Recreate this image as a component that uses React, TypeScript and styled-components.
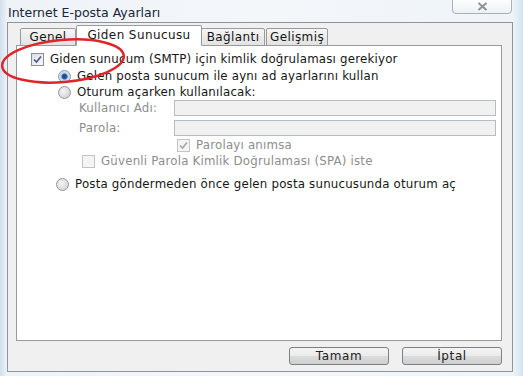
import styled, { createGlobalStyle } from 'styled-components';

const GlobalStyle = createGlobalStyle`
  html, body {
    margin: 0;
    padding: 0;
    background: #dfe9f2;
  }
  * {
    box-sizing: border-box;
  }
`;

const Window = styled.div`
  position: relative;
  width: 523px;
  height: 376px;
  overflow: hidden;
  display: flex;
  flex-direction: column;
  font-family: 'DejaVu Sans', Verdana, sans-serif;
  font-size: 11.8px;
  letter-spacing: 0.2px;
  color: #161616;
  background: linear-gradient(90deg, #cfe0ee 0px, #eef3f8 7px, #f4f7fa 50%, #eef4f8 calc(100% - 10px), #d3e4ef 100%);
`;

const TitleBar = styled.div`
  height: 22px;
  flex: none;
  display: flex;
  align-items: flex-start;
  justify-content: space-between;
  padding-left: 8px;
`;

const Title = styled.div`
  padding-top: 5px;
  font-size: 12.5px;
  letter-spacing: 0;
  color: #1a2638;
`;

const CloseButton = styled.div`
  width: 60px;
  height: 17px;
  margin-top: -3px;
  margin-right: 11px;
  border: 1px solid #a9b0b8;
  border-radius: 0 0 4px 4px;
  background: linear-gradient(#ffffff, #eef1f4);
  display: flex;
  align-items: center;
  justify-content: center;
  padding-top: 2px;
`;

const Frame = styled.div`
  flex: 1;
  margin: 0 10px 4px 7px;
  border: 1px solid #8e949b;
  background: #f0f0f0;
  padding: 2px 10px 6px 8px;
  display: flex;
  flex-direction: column;
`;

const TabStrip = styled.div`
  display: flex;
  align-items: flex-end;
  height: 21px;
  padding-left: 4px;
  margin-bottom: -1px;
  position: relative;
  z-index: 1;
`;

const Tab = styled.div<{ $active?: boolean; $width: number }>`
  position: relative;
  width: ${p => p.$width}px;
  height: ${p => (p.$active ? 21 : 18)}px;
  border: 1px solid #9a9a9a;
  border-bottom: ${p => (p.$active ? '1px solid #ffffff' : '1px solid #9a9a9a')};
  border-radius: 2px 2px 0 0;
  margin-left: ${p => (p.$active ? -1 : 0)}px;
  margin-right: ${p => (p.$active ? -1 : 1)}px;
  background: ${p => (p.$active ? '#ffffff' : 'linear-gradient(#f6f6f6, #e2e2e2)')};
  display: flex;
  align-items: center;
  justify-content: center;
  font-size: 12px;
  letter-spacing: 0.4px;
  white-space: nowrap;
  padding-bottom: ${p => (p.$active ? 2 : 0)}px;
  z-index: ${p => (p.$active ? 2 : 1)};
`;

const Panel = styled.div`
  flex: 1;
  background: #ffffff;
  border: 1px solid #9a9a9a;
  padding: 5px 5px 0 14px;
  display: flex;
  flex-direction: column;
`;

const Row = styled.div<{ $indent?: number; $top?: number }>`
  display: flex;
  align-items: center;
  height: 16px;
  margin-left: ${p => p.$indent ?? 0}px;
  margin-top: ${p => p.$top ?? 0}px;
  gap: 6px;
  white-space: nowrap;
`;

const FieldRow = styled.div<{ $top?: number }>`
  display: flex;
  align-items: center;
  height: 16px;
  margin-left: 48px;
  margin-top: ${p => p.$top ?? 0}px;
`;

const FieldLabel = styled.span`
  width: 95px;
  color: #8d8d8d;
`;

const Input = styled.div`
  flex: 1;
  height: 16px;
  border: 1px solid #b7bcc4;
  background: #f1f1f1;
`;

const Label = styled.span<{ $disabled?: boolean }>`
  color: ${p => (p.$disabled ? '#8d8d8d' : '#161616')};
`;

const Box = styled.span<{ $disabled?: boolean }>`
  width: 13px;
  height: 13px;
  flex: none;
  border: 1px solid ${p => (p.$disabled ? '#c4c4c4' : '#8e8f95')};
  background: ${p => (p.$disabled ? '#f4f4f4' : 'linear-gradient(135deg, #dcdfe6, #f7f8fa)')};
  display: flex;
  align-items: center;
  justify-content: center;
`;

const Radio = styled.span<{ $checked?: boolean }>`
  width: 13px;
  height: 13px;
  flex: none;
  border-radius: 50%;
  border: 1px solid #9297a0;
  background: ${p =>
    p.$checked
      ? 'radial-gradient(circle, #1f3f78 0, #2d5fa0 2.5px, #bcd6ee 3.5px, #e6eef6 100%)'
      : 'radial-gradient(circle at 40% 40%, #f4f4f4, #c9cbcf)'};
`;

const ButtonRow = styled.div`
  display: flex;
  justify-content: flex-end;
  gap: 13px;
  padding-top: 6px;
`;

const Button = styled.div`
  width: 100px;
  height: 18px;
  border: 1px solid #7b7f86;
  border-radius: 3px;
  background: linear-gradient(#f4f4f4 0, #ebebeb 50%, #dcdcdc 51%, #cfcfcf 100%);
  display: flex;
  align-items: center;
  justify-content: center;
  font-size: 12px;
  letter-spacing: 0.6px;
  color: #222;
`;

const Annotation = styled.svg`
  position: absolute;
  left: 0;
  top: 0;
  z-index: 10;
  pointer-events: none;
`;

const Check = ({ disabled }: { disabled?: boolean }) => (
  <svg width="9" height="9" viewBox="0 0 9 9">
    <path
      d="M1 4.5 L3.5 7 L8 1.5"
      fill="none"
      stroke={disabled ? '#a6a6a6' : '#4b5687'}
      strokeWidth="1.6"
    />
  </svg>
);

export default function App() {
  return (
    <>
      <GlobalStyle />
      <Window>
        <TitleBar>
          <Title>Internet E-posta Ayarları</Title>
          <CloseButton>
            <svg width="11" height="9" viewBox="0 0 11 9">
              <path d="M1.5 1 L9.5 8 M9.5 1 L1.5 8" stroke="#8d939a" strokeWidth="2" />
            </svg>
          </CloseButton>
        </TitleBar>
        <Frame>
          <TabStrip>
            <Tab $width={56}>Genel</Tab>
            <Tab $width={126} $active>
              Giden Sunucusu
            </Tab>
            <Tab $width={64}>Bağlantı</Tab>
            <Tab $width={62}>Gelişmiş</Tab>
          </TabStrip>
          <Panel>
            <Row>
              <Box>
                <Check />
              </Box>
              <Label>Giden sunucum (SMTP) için kimlik doğrulaması gerekiyor</Label>
            </Row>
            <Row $indent={27} $top={1}>
              <Radio $checked />
              <Label>Gelen posta sunucum ile aynı ad ayarlarını kullan</Label>
            </Row>
            <Row $indent={27}>
              <Radio />
              <Label>Oturum açarken kullanılacak:</Label>
            </Row>
            <FieldRow $top={0}>
              <FieldLabel>Kullanıcı Adı:</FieldLabel>
              <Input />
            </FieldRow>
            <FieldRow $top={4}>
              <FieldLabel>Parola:</FieldLabel>
              <Input />
            </FieldRow>
            <Row $indent={146} $top={1}>
              <Box $disabled>
                <Check disabled />
              </Box>
              <Label $disabled>Parolayı anımsa</Label>
            </Row>
            <Row $indent={51}>
              <Box $disabled />
              <Label $disabled>Güvenli Parola Kimlik Doğrulaması (SPA) iste</Label>
            </Row>
            <Row $indent={25} $top={7}>
              <Radio />
              <Label>Posta göndermeden önce gelen posta sunucusunda oturum aç</Label>
            </Row>
          </Panel>
          <ButtonRow>
            <Button>Tamam</Button>
            <Button>İptal</Button>
          </ButtonRow>
        </Frame>
        <Annotation width="523" height="376" viewBox="0 0 523 376">
          <ellipse
            cx="63"
            cy="61"
            rx="61"
            ry="21"
            transform="rotate(-5 63 61)"
            fill="none"
            stroke="#e0242a"
            strokeWidth="2.5"
          />
        </Annotation>
      </Window>
    </>
  );
}
